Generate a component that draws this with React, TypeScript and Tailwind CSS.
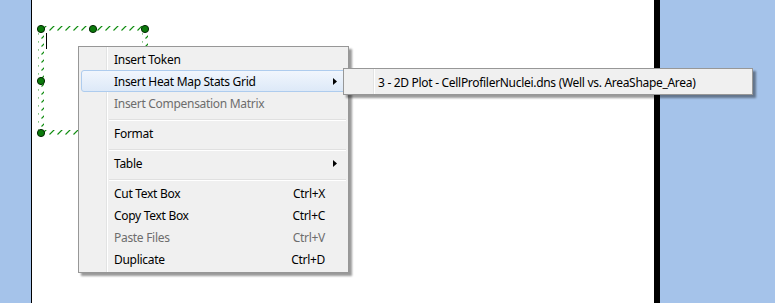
import React from "react";

type Item =
  | { kind: "sep" }
  | { kind: "item"; label: string; shortcut?: string; disabled?: boolean; sub?: boolean; hot?: boolean };

const items: Item[] = [
  { kind: "item", label: "Insert Token" },
  { kind: "item", label: "Insert Heat Map Stats Grid", sub: true, hot: true },
  { kind: "item", label: "Insert Compensation Matrix", disabled: true },
  { kind: "sep" },
  { kind: "item", label: "Format" },
  { kind: "sep" },
  { kind: "item", label: "Table", sub: true },
  { kind: "sep" },
  { kind: "item", label: "Cut Text Box", shortcut: "Ctrl+X" },
  { kind: "item", label: "Copy Text Box", shortcut: "Ctrl+C" },
  { kind: "item", label: "Paste Files", shortcut: "Ctrl+V", disabled: true },
  { kind: "item", label: "Duplicate", shortcut: "Ctrl+D" },
];

const Arrow = () => (
  <svg width="4" height="7" viewBox="0 0 4 7" className="block">
    <path d="M0 0 L4 3.5 L0 7 Z" fill="#000" />
  </svg>
);

const Selection = () => (
  <svg className="absolute left-0 top-0 pointer-events-none" width="200" height="150">
    <defs>
      <pattern id="hatch" patternUnits="userSpaceOnUse" width="8" height="8">
        <line x1="1.5" y1="6.5" x2="6.5" y2="1.5" stroke="#108c10" strokeWidth="1.1" />
      </pattern>
    </defs>
    <rect x="41" y="26" width="104" height="6" fill="url(#hatch)" />
    <rect x="38" y="29" width="6" height="104" fill="url(#hatch)" />
    <rect x="142" y="29" width="6" height="104" fill="url(#hatch)" />
    <rect x="41" y="130" width="104" height="6" fill="url(#hatch)" />
    {[
      [41, 29],
      [93, 29],
      [145, 29],
      [41, 81],
      [41, 133],
    ].map(([x, y], i) => (
      <circle key={i} cx={x} cy={y} r="3.6" fill="#0a7a0a" stroke="#062806" strokeWidth="1" />
    ))}
    <line x1="46.5" y1="33" x2="46.5" y2="49" stroke="#000" strokeWidth="1" />
  </svg>
);

const ContextMenu = () => (
  <div className="absolute left-[78px] top-[46px] w-[271px] bg-[#f0f0f0] border border-[#979797] shadow-[3px_3px_2px_rgba(0,0,0,0.4)] pt-[1px] pb-[2px] px-[2px]">
    <div className="absolute left-[27px] top-0 bottom-0 w-[2px] border-l border-[#e2e3e3] border-r border-r-white" />
    {items.map((it, i) =>
      it.kind === "sep" ? (
        <div key={i} className="h-[8px] flex flex-col justify-center pl-[28px]">
          <div className="h-[1px] bg-[#e0e0e0] mt-[3px]" />
          <div className="h-[1px] bg-white" />
        </div>
      ) : (
        <div
          key={i}
          className={
            "relative h-[22px] flex items-center pt-[2px] pl-[32px] pr-[20px] rounded-[3px] border " +
            (it.hot
              ? "border-[#aeccee] bg-gradient-to-b from-[#f1f6fd] to-[#dde9f8]"
              : "border-transparent") +
            (it.disabled ? " text-[#6d6d6d]" : " text-[#000000]")
          }
        >
          <span className="flex-1 whitespace-nowrap">{it.label}</span>
          {it.shortcut && <span className="whitespace-nowrap">{it.shortcut}</span>}
          {it.sub && (
            <span className="absolute right-[8px] top-[7px]">
              <Arrow />
            </span>
          )}
        </div>
      )
    )}
  </div>
);

const SubMenu = () => (
  <div className="absolute left-[343px] top-[68px] w-[410px] h-[27px] bg-[#f0f0f0] border border-[#979797] shadow-[3px_3px_2px_rgba(0,0,0,0.4)] flex items-center pt-[2px]">
    <div className="absolute left-[29px] top-0 bottom-0 w-[2px] border-l border-[#e2e3e3] border-r border-r-white" />
    <span className="pl-[34px] whitespace-nowrap text-black">3 - 2D Plot - CellProfilerNuclei.dns (Well vs. AreaShape_Area)</span>
  </div>
);

export default function App() {
  return (
    <div
      className="relative w-[775px] h-[303px] flex overflow-hidden text-[12px] leading-none tracking-[-0.3px]"
      style={{ fontFamily: '"Noto Sans", "Open Sans", sans-serif' }}
    >
      <div className="w-[31px] bg-[#a5c3ea]" />
      <div className="w-[1px] bg-black" />
      <div className="w-[622px] bg-white" />
      <div className="w-[6px] bg-black" />
      <div className="flex-1 bg-[#a5c3ea]" />
      <Selection />
      <ContextMenu />
      <SubMenu />
    </div>
  );
}
